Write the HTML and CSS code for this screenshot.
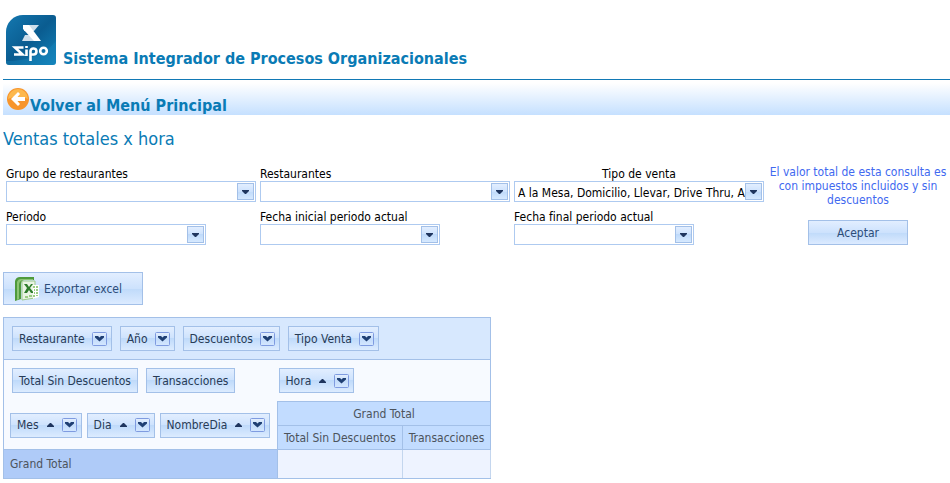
FILE: index.html
```html
<!DOCTYPE html>
<html lang="es">
<head>
    <meta charset="UTF-8">
    <meta name="viewport" content="width=device-width, initial-scale=1.0">
    <title>Ventas totales x hora</title>
    <link rel="stylesheet" href="styles.css">
</head>
<body>
    <!-- shared icons -->
    <svg class="sprite" width="0" height="0" aria-hidden="true">
        <defs>
            <linearGradient id="btnFill" x1="0" y1="0" x2="0" y2="1">
                <stop offset="0" stop-color="#e6f0fe"/>
                <stop offset="0.5" stop-color="#c3dcfb"/>
                <stop offset="1" stop-color="#d4e7ff"/>
            </linearGradient>
        </defs>
        <symbol id="filter" viewBox="0 0 15 14">
            <rect x="0.5" y="0.5" width="14" height="13" rx="1" fill="url(#btnFill)" stroke="#7f9be0"/>
            <path d="M3 4h3l1.500 1.500L9 4h3v1.500L7.500 9.500 3 5.500z" fill="#1f3f73"/>
        </symbol>
        <symbol id="sort" viewBox="0 0 7 4">
            <path d="M3 0h1l3 3v1H0V3z" fill="#1f355e"/>
        </symbol>
        <symbol id="down" viewBox="0 0 7 4">
            <path d="M0 0h7v1L4 4H3L0 1z" fill="#1f355e"/>
        </symbol>
    </svg>

    <header class="header">
        <svg class="logo" viewBox="0 0 50 50" role="img" aria-label="Sipo">
            <defs>
                <linearGradient id="logoFill" x1="0" y1="0" x2="1" y2="1">
                    <stop offset="0" stop-color="#1478b0"/>
                    <stop offset="0.5" stop-color="#0a5c90"/>
                    <stop offset="1" stop-color="#1383ba"/>
                </linearGradient>
            </defs>
            <path d="M17 0h30a3 3 0 0 1 3 3v44a3 3 0 0 1-3 3H3a3 3 0 0 1-3-3V17A17 17 0 0 1 17 0z" fill="url(#logoFill)"/>
            <path d="M0 46Q34 46 50 26v21a3 3 0 0 1-3 3H3a3 3 0 0 1-3-3z" fill="#1a8cc4" opacity="0.35"/>
            <path d="M18 10h15l-5 6H18z" fill="#cfdfeb"/>
            <path d="M19 20h7l6 6H16z" fill="#cfdfeb"/>
            <path d="M17 10h6l12 16h-7L17 14z" fill="#fff"/>
            <g fill="none" stroke="#fff" stroke-width="2.600">
                <path d="M17.500 32.500H9l7.500 7H8M20.500 34.500V41M20.500 31v2M24.500 46V36a3 3 0 1 1 3 3.500h-2"/>
                <circle cx="37.500" cy="36" r="3.300"/>
            </g>
        </svg>
        <h1>Sistema Integrador de Procesos Organizacionales</h1>
    </header>

    <nav class="menu-bar">
        <a href="#">
            <svg class="back" viewBox="0 0 22 22" aria-hidden="true">
                <circle cx="11" cy="11" r="11" fill="#f7952c"/>
                <path d="M1 11a10 10 0 0 1 20 0c-6-3-14-3-20 0z" fill="#fdb84d"/>
                <path d="M11 4 4 11l7 7 2-2L10.500 13H18V9h-7.500L13 6z" fill="#fff"/>
            </svg>
            <span>Volver al Menú Principal</span>
        </a>
    </nav>

    <h2>Ventas totales x hora</h2>

    <form class="filters">
        <div class="field">
            <label for="grupo">Grupo de restaurantes</label>
            <div class="combo">
                <select id="grupo"><option></option></select>
                <span class="arrow"><svg><use href="#down"/></svg></span>
            </div>
        </div>
        <div class="field">
            <label for="restaurantes">Restaurantes</label>
            <div class="combo">
                <select id="restaurantes"><option></option></select>
                <span class="arrow"><svg><use href="#down"/></svg></span>
            </div>
        </div>
        <div class="field">
            <label class="centered" for="tipo">Tipo de venta</label>
            <div class="combo">
                <select id="tipo"><option>A la Mesa, Domicilio, Llevar, Drive Thru, A</option></select>
                <span class="arrow"><svg><use href="#down"/></svg></span>
            </div>
        </div>
        <p class="note">El valor total de esta consulta es con impuestos incluidos y sin descuentos</p>
        <div class="field">
            <label for="periodo">Periodo</label>
            <div class="combo period">
                <select id="periodo"><option></option></select>
                <span class="arrow"><svg><use href="#down"/></svg></span>
            </div>
        </div>
        <div class="field">
            <label for="fechaInicial">Fecha inicial periodo actual</label>
            <div class="combo date">
                <input type="text" id="fechaInicial">
                <button type="button" class="arrow" aria-label="Abrir calendario"><svg><use href="#down"/></svg></button>
            </div>
        </div>
        <div class="field">
            <label for="fechaFinal">Fecha final periodo actual</label>
            <div class="combo date">
                <input type="text" id="fechaFinal">
                <button type="button" class="arrow" aria-label="Abrir calendario"><svg><use href="#down"/></svg></button>
            </div>
        </div>
        <button type="button" class="btn accept">Aceptar</button>
    </form>

    <button type="button" class="btn export">
        <svg viewBox="0 0 24 24" aria-hidden="true">
            <path d="M0 4Q1 0 5 0h14v3H9Q6 4 6 8v14l-6 2z" fill="#4f9a3c"/>
            <path d="M2 5q1-3 4-3h12v1H8Q4 4 4 8v14l-2 1z" fill="#8cc474"/>
            <path d="M7 4h13v17L7 23z" fill="#e9f4e4" stroke="#9cc98c"/>
            <path d="M9 7h3l2 3 2-3h2l-3 4 4 5h-3l-2-3-2 3H9l3-5z" fill="#2e7d2b"/>
            <path d="M18 8h6v12l-6 2z" fill="#fff"/>
            <path d="M18 9h2v2h-2zM21 9h2v2h-2zM19 12h1v2h-1zM21 12h2v2h-2zM19 15h1v2h-1zM21 15h2v2h-2zM10 19h3v2h-3zM14 18h3v2h-3zM18 18h2v2h-2zM21 18h2v1h-2z" fill="#9bcd83"/>
        </svg>
        <span>Exportar excel</span>
    </button>

    <table class="pivot">
        <colgroup>
            <col class="col-rows">
            <col class="col-total">
            <col class="col-trans">
        </colgroup>
        <tr class="filter-area">
            <td colspan="3">
                <div class="chips">
                    <button class="chip">Restaurante <svg class="filter"><use href="#filter"/></svg></button>
                    <button class="chip">Año <svg class="filter"><use href="#filter"/></svg></button>
                    <button class="chip">Descuentos <svg class="filter"><use href="#filter"/></svg></button>
                    <button class="chip">Tipo Venta <svg class="filter"><use href="#filter"/></svg></button>
                </div>
            </td>
        </tr>
        <tr class="data-area">
            <td>
                <div class="chips">
                    <button class="chip">Total Sin Descuentos</button>
                    <button class="chip">Transacciones</button>
                </div>
            </td>
            <td class="column-area" colspan="2">
                <div class="chips">
                    <button class="chip sorted">Hora <svg class="sort"><use href="#sort"/></svg> <svg class="filter"><use href="#filter"/></svg></button>
                </div>
            </td>
        </tr>
        <tr class="head">
            <td class="row-area" rowspan="2">
                <div class="chips">
                    <button class="chip sorted">Mes <svg class="sort"><use href="#sort"/></svg> <svg class="filter"><use href="#filter"/></svg></button>
                    <button class="chip sorted">Dia <svg class="sort"><use href="#sort"/></svg> <svg class="filter"><use href="#filter"/></svg></button>
                    <button class="chip sorted">NombreDia <svg class="sort"><use href="#sort"/></svg> <svg class="filter"><use href="#filter"/></svg></button>
                </div>
            </td>
            <th colspan="2">Grand Total</th>
        </tr>
        <tr class="head">
            <th>Total Sin Descuentos</th>
            <th>Transacciones</th>
        </tr>
        <tr class="total">
            <th>Grand Total</th>
            <td></td>
            <td></td>
        </tr>
    </table>
</body>
</html>
```
FILE: styles.css
```css
body {
    margin: 0 0 0 3px;
    background-color: #fff;
    color: #000;
    font-family: Tahoma, "DejaVu Sans Condensed", "DejaVu Sans", sans-serif;
    font-size: 12px;
    line-height: 14px;
}
button, input, select {
    font: inherit;
    color: inherit;
}
.sprite {
    position: absolute;
}
.header {
    display: flex;
    align-items: flex-end;
    gap: 7px;
    padding: 15px 0 14px 3px;
    border-bottom: 1px solid #1279b5;
}
.logo {
    width: 50px;
    height: 50px;
}
h1, h2 {
    margin: 0;
    color: #0a7bb5;
}
h1 {
    font-size: 16px;
    line-height: 12px;
}
.menu-bar {
    margin-top: 3px;
    height: 32px;
    background: linear-gradient(#fff, #c5e0ff);
}
.menu-bar a {
    display: flex;
    align-items: flex-start;
    gap: 1px;
    padding: 5px 0 0 4px;
    color: #0a7bb5;
    font-size: 16px;
    font-weight: bold;
    text-decoration: none;
}
.menu-bar span {
    padding-top: 11px;
}
.back {
    width: 22px;
    height: 22px;
}
h2 {
    padding: 13px 0 15px;
    font-size: 18px;
    font-weight: normal;
    line-height: 22px;
}

/* filters */
.filters {
    display: grid;
    grid-template-columns: 250px 250px 250px 1fr;
    grid-template-rows: 37px 36px;
    gap: 7px 4px;
    padding: 0 2px 0 3px;
}
.field {
    display: flex;
    flex-direction: column;
    justify-content: flex-end;
}
.centered {
    text-align: center;
}
.combo {
    position: relative;
    box-sizing: border-box;
    height: 21px;
    border: 1px solid #aecaf0;
}
.period { width: 200px; }
.date { width: 180px; }
.combo select, .combo input {
    appearance: none;
    display: block;
    box-sizing: border-box;
    width: 100%;
    height: 19px;
    padding: 2px 18px 0 3px;
    border: none;
    border-radius: 0;
    background: #fff;
}
.arrow {
    position: absolute;
    top: 1px;
    right: 1px;
    display: flex;
    align-items: center;
    justify-content: center;
    box-sizing: border-box;
    width: 17px;
    height: 17px;
    padding: 0;
    border: 1px solid #a3c0e8;
    background: linear-gradient(#e2eeff, #cde2fd 50%, #bfdafa 50%, #d6e9ff);
    pointer-events: none;
}
button.arrow {
    pointer-events: auto;
}
.arrow svg, .sort {
    width: 7px;
    height: 4px;
}
.note {
    margin: 0;
    color: #4169f0;
    text-align: center;
}
.btn {
    border: 1px solid #a3c0e8;
    color: #2c4d79;
    background: linear-gradient(#e2eeff, #cde2fd 50%, #bfdafa 50%, #dcebff);
}
.accept {
    width: 100px;
    height: 25px;
    align-self: end;
    justify-self: center;
}
.export {
    display: flex;
    align-items: center;
    gap: 5px;
    width: 140px;
    height: 33px;
    margin: 27px 0 12px;
    padding: 0 11px;
}
.export svg {
    width: 24px;
    height: 24px;
}

/* pivot grid */
.pivot {
    table-layout: fixed;
    width: 488px;
    border-collapse: collapse;
    border: 1px solid #a3c0e8;
    background: #f7faff;
}
.col-rows { width: 274px; }
.col-total { width: 125px; }
.pivot td, .pivot th {
    padding: 0;
    font-weight: normal;
}
.filter-area {
    height: 42px;
    background: #d7e8fe;
    border-bottom: 1px solid #a3c0e8;
}
.data-area {
    height: 42px;
}
.head {
    height: 24px;
}
.chips {
    display: flex;
    gap: 8px;
    padding-left: 8px;
}
.column-area .chips {
    padding-left: 1px;
}
.row-area .chips {
    gap: 5px;
    padding-left: 6px;
}
.chip {
    display: flex;
    align-items: center;
    gap: 7px;
    height: 25px;
    padding: 0 6px;
    border: 1px solid #a3c0e8;
    color: #283b56;
    background: linear-gradient(#e2eeff, #cde2fd 50%, #bfdafa 50%, #dcebff);
}
.chip:has(.filter) {
    padding-right: 4px;
}
.sorted {
    gap: 8px;
}
.filter {
    width: 15px;
    height: 14px;
}
.head th {
    border: 1px solid #a3c0e8;
    background: #c2dcff;
    color: #4c535c;
}
.total {
    height: 29px;
}
.pivot .total th {
    padding-left: 6px;
    border: 1px solid #a3c0e8;
    background: #afcbf8;
    color: #4c535c;
    text-align: left;
}
.total td {
    border: 1px solid #c4d6ee;
    border-bottom-color: #a3c0e8;
    background: #eef3ff;
}
```
